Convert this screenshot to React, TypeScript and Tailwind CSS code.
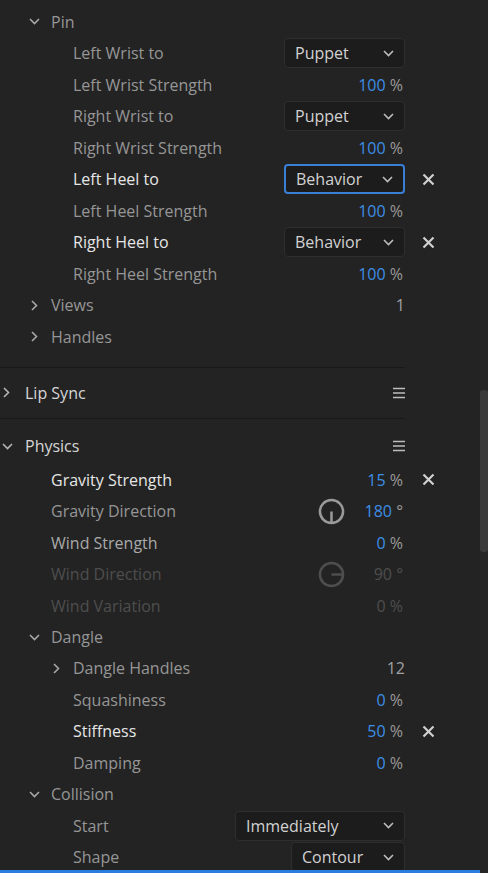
import { ReactNode } from "react";

const FONT = { fontFamily: '"Open Sans", "Noto Sans", sans-serif' };

const ChevronDown = ({ className = "" }: { className?: string }) => (
  <svg width="11" height="7" viewBox="0 0 11 7" className={className}>
    <path d="M1 1l4.5 4.5L10 1" fill="none" stroke="currentColor" strokeWidth="1.6" />
  </svg>
);

const ChevronRight = ({ className = "" }: { className?: string }) => (
  <svg width="7" height="11" viewBox="0 0 7 11" className={className}>
    <path d="M1 1l4.5 4.5L1 10" fill="none" stroke="currentColor" strokeWidth="1.6" />
  </svg>
);

const Close = () => (
  <svg width="13" height="13" viewBox="0 0 13 13" className="text-[#d0d0d0]">
    <path d="M1.5 1.5l10 10M11.5 1.5l-10 10" stroke="currentColor" strokeWidth="2.2" />
  </svg>
);

const Menu = () => (
  <svg width="12" height="12" viewBox="0 0 12 12" className="text-[#bdbdbd]">
    <path d="M0 1.5h12M0 6h12M0 10.5h12" stroke="currentColor" strokeWidth="1.6" />
  </svg>
);

const Dial = ({ angle, dim }: { angle: "down" | "right"; dim?: boolean }) => (
  <svg width="27" height="27" viewBox="0 0 28 28" className={dim ? "text-[#4e4e4e]" : "text-[#9a9a9a]"}>
    <circle cx="14" cy="14" r="12" fill="none" stroke="currentColor" strokeWidth="2.6" />
    {angle === "down" ? (
      <path d="M14 14v12" stroke="currentColor" strokeWidth="2.6" />
    ) : (
      <path d="M14 14h12" stroke="currentColor" strokeWidth="2.6" />
    )}
  </svg>
);

const Select = ({ value, width, focus }: { value: string; width: string; focus?: boolean }) => (
  <div
    className={`flex h-[30px] items-center justify-between rounded-[4px] bg-[#1c1c1c] pl-[10px] pr-[10px] text-[16px] text-[#d2d2d2] ${width} ${
      focus ? "border-2 border-[#3a7fd6] pl-[9px]" : "border border-[#2e2e2e]"
    }`}
  >
    <span>{value}</span>
    <ChevronDown className="text-[#bdbdbd]" />
  </div>
);

const Pct = ({ n, unit = "%", dim }: { n: string; unit?: string; dim?: boolean }) => (
  <span className="mr-[2px] text-[16px]">
    <span className={dim ? "text-[#4e4e4e]" : "text-[#3d8ee6]"}>{n}</span>
    <span className={dim ? "text-[#4e4e4e]" : "text-[#9a9a9a]"}> {unit}</span>
  </span>
);

const DialValue = ({ angle, n, dim }: { angle: "down" | "right"; n: string; dim?: boolean }) => (
  <div className="flex items-center">
    <Dial angle={angle} dim={dim} />
    <div className="flex w-[60px] justify-end">
      <Pct n={n} unit="°" dim={dim} />
    </div>
  </div>
);

type RowProps = {
  indent: number;
  label: string;
  tone?: "normal" | "bright" | "mid" | "dim";
  chevron?: "down" | "right";
  right?: ReactNode;
  close?: boolean;
};

const toneCls = {
  normal: "text-[#969696]",
  bright: "text-[#e6e6e6] font-medium",
  mid: "text-[#a9a9a9]",
  dim: "text-[#4e4e4e]",
};

const Row = ({ indent, label, tone = "normal", chevron, right, close }: RowProps) => (
  <div className="flex h-[31.5px] items-center">
    <div className="relative flex flex-1 items-center" style={{ paddingLeft: indent }}>
      {chevron && (
        <span className="absolute flex w-[12px] justify-center" style={{ left: indent - 23 }}>
          {chevron === "down" ? (
            <ChevronDown className="text-[#a8a8a8]" />
          ) : (
            <ChevronRight className="text-[#a8a8a8]" />
          )}
        </span>
      )}
      <span className={`text-[16px] ${toneCls[tone]}`}>{label}</span>
    </div>
    <div className="flex items-center">{right}</div>
    <div className="flex w-[75px] items-center pl-[17px]">{close && <Close />}</div>
  </div>
);

export default function App() {
  return (
    <div className="flex h-[873px] w-[488px] overflow-hidden bg-[#232323]" style={FONT}>
      <div className="relative flex w-[480px] flex-col">
        <div className="pt-[6px]">
          <Row indent={51} label="Pin" chevron="down" />
          <Row indent={73} label="Left Wrist to" right={<Select value="Puppet" width="w-[121px]" />} />
          <Row indent={73} label="Left Wrist Strength" right={<Pct n="100" />} />
          <Row indent={73} label="Right Wrist to" right={<Select value="Puppet" width="w-[121px]" />} />
          <Row indent={73} label="Right Wrist Strength" right={<Pct n="100" />} />
          <Row indent={73} label="Left Heel to" tone="bright" right={<Select value="Behavior" width="w-[121px]" focus />} close />
          <Row indent={73} label="Left Heel Strength" right={<Pct n="100" />} />
          <Row indent={73} label="Right Heel to" tone="bright" right={<Select value="Behavior" width="w-[121px]" />} close />
          <Row indent={73} label="Right Heel Strength" right={<Pct n="100" />} />
          <Row indent={51} label="Views" chevron="right" right={<span className="text-[16px] text-[#a0a0a0]">1</span>} />
          <Row indent={51} label="Handles" chevron="right" />
        </div>

        <div className="mt-[14px] h-px w-[405px] bg-[#191919]" />
        <div className="flex h-[51px] w-[405px] items-center">
          <span className="flex w-[25px] justify-center pr-[12px]">
            <ChevronRight className="text-[#b5b5b5]" />
          </span>
          <span className="flex-1 text-[16px] font-medium text-[#d6d6d6]">Lip Sync</span>
          <Menu />
        </div>
        <div className="h-px w-[405px] bg-[#191919]" />

        <div className="flex h-[44.5px] w-[405px] items-start pt-[15px]">
          <div className="flex h-[24px] w-full items-center">
            <span className="flex w-[25px] justify-center pr-[10px]">
              <ChevronDown className="text-[#b5b5b5]" />
            </span>
            <span className="flex-1 text-[16px] font-medium text-[#d6d6d6]">Physics</span>
            <Menu />
          </div>
        </div>

        <Row indent={51} label="Gravity Strength" tone="bright" right={<Pct n="15" />} close />
        <Row indent={51} label="Gravity Direction" right={<DialValue angle="down" n="180" />} />
        <Row indent={51} label="Wind Strength" tone="mid" right={<Pct n="0" />} />
        <Row indent={51} label="Wind Direction" tone="dim" right={<DialValue angle="right" n="90" dim />} />
        <Row indent={51} label="Wind Variation" tone="dim" right={<Pct n="0" dim />} />
        <Row indent={51} label="Dangle" chevron="down" />
        <Row indent={73} label="Dangle Handles" chevron="right" right={<span className="text-[16px] text-[#a0a0a0]">12</span>} />
        <Row indent={73} label="Squashiness" right={<Pct n="0" />} />
        <Row indent={73} label="Stiffness" tone="bright" right={<Pct n="50" />} close />
        <Row indent={73} label="Damping" right={<Pct n="0" />} />
        <Row indent={51} label="Collision" chevron="down" />
        <Row indent={73} label="Start" right={<Select value="Immediately" width="w-[170px]" />} />
        <Row indent={73} label="Shape" right={<Select value="Contour" width="w-[114px]" />} />

        <div className="absolute bottom-0 left-0 h-[3px] w-full bg-[#2a7de0]" />
      </div>
      <div className="flex w-[8px] flex-col bg-[#262626]">
        <div className="h-[390px]" />
        <div className="h-[162px] rounded-[3px] bg-[#3a3a3a]" />
      </div>
    </div>
  );
}
